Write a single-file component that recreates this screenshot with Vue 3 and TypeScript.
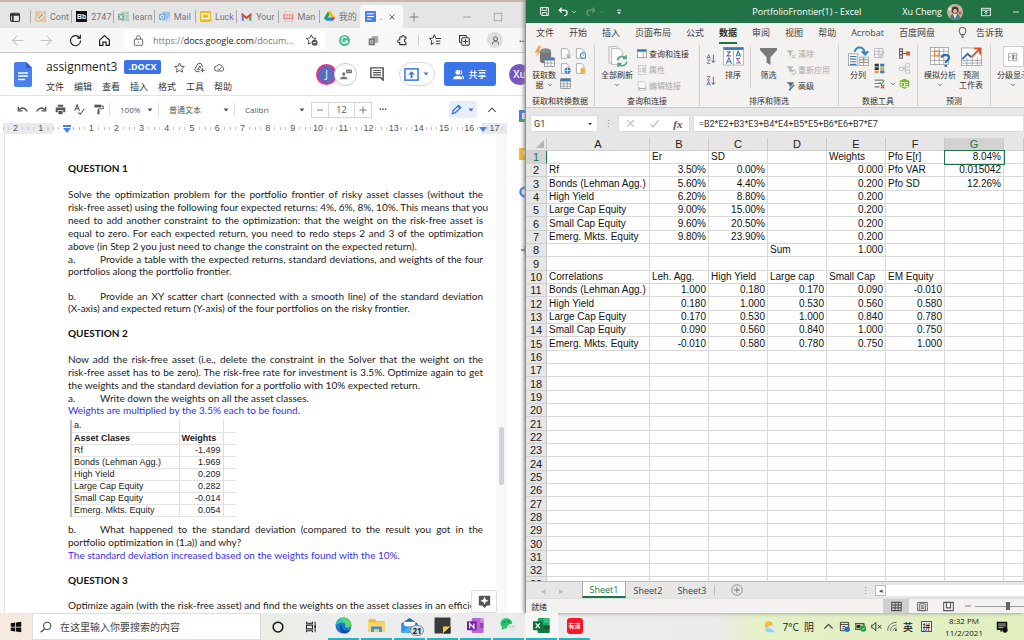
<script setup lang="ts">
import { ref } from 'vue'

interface Tab { icon: string; title: string }
type Row = Record<string, string>

const icons: Record<string, string> = {
  pane: '<rect x="2" y="3" width="12" height="11" rx="2" fill="none" stroke="#333" stroke-width="1.4"/><path d="M2 5h12M5 5v9" stroke="#333" stroke-width="2.4"/>',
  pencil: '<rect width="16" height="16" fill="#eac69c"/><path d="M3 13l1-4 7-7 3 3-7 7z" fill="#fff"/><path d="M5 11l7-7" stroke="#6aa7a5" stroke-width="2"/>',
  bb: '<rect width="16" height="16" fill="#111"/><text x="8" y="12" font-size="10" font-weight="700" fill="#fff" text-anchor="middle" font-family="Liberation Sans">Bb</text>',
  xl: '<rect x="5" y="1" width="11" height="14" fill="#a9cdb8"/><path d="M5 5h11M5 10h11M10 1v14" stroke="#d5e8dc"/><rect y="4" width="9" height="9" fill="#7db296"/><path d="M2.500 6l4 5M6.500 6l-4 5" stroke="#fff" stroke-width="1.300"/>',
  outlook: '<rect x="5" y="1" width="11" height="12" fill="#9cc4ea"/><path d="M5 8l6 4 5-4v7H5z" fill="#bfdaf2"/><rect y="4" width="9" height="9" fill="#77a9da"/><circle cx="4.500" cy="8.500" r="2.300" fill="none" stroke="#fff" stroke-width="1.400"/>',
  slides: '<rect x="0" y="0" width="16" height="16" rx="2" fill="#f5b912"/><rect x="3" y="4" width="10" height="7" fill="none" stroke="#fff" stroke-width="2"/>',
  gmail: '<path d="M1 14V3l3 2v9z" fill="#4285f4"/><path d="M12 14V5l3-2v11z" fill="#34a853"/><path d="M1 3l7 5 7-5v4l-7 5-7-5z" fill="#ea4335"/>',
  pdf: '<path d="M3 0h8l3 3v13H3z" fill="#f5dcd9" stroke="#e7aaa5"/><rect x="0" y="5" width="15" height="7" fill="#e48f88"/><path d="M3 10V7h2v1.500H3M7 7v3h1.500V7zM11 10V7h2M11 8.500h2" stroke="#fff" fill="none"/>',
  drive: '<path d="M5.500 1h5L8 5.500 3 14 0 10z" fill="#0da960"/><path d="M5.500 1h5L16 10h-5z" fill="#fcbc05"/><path d="M3 14l2.500-4.500H16L13 14z" fill="#2b7df5"/><path d="M11 9.500h5L13 14z" fill="#e44336"/>',
  docs: '<rect width="16" height="16" rx="1" fill="#4a80ee"/><path d="M3 4h10M3 8h10M3 12h6" stroke="#fff" stroke-width="1.800"/>',
  back: '<path d="M15 8H2M8 2L2 8l6 6" fill="none" stroke="#c4c4c4" stroke-width="1.300"/>',
  fwd: '<path d="M1 8h13M8 2l6 6-6 6" fill="none" stroke="#c4c4c4" stroke-width="1.300"/>',
  reload: '<path d="M13 4.500A6.200 6.200 0 1 0 14.200 8M14 1v4h-4" fill="none" stroke="#222" stroke-width="1.400"/>',
  home: '<path d="M2 7.500L8 2l6 5.500V14h-4v-4H6v4H2z" fill="none" stroke="#222" stroke-width="1.500"/>',
  lock: '<rect x="2" y="6" width="12" height="9" rx="1" fill="none" stroke="#666" stroke-width="1.400"/><path d="M5 6V4a3 3 0 0 1 6 0v2" fill="none" stroke="#666" stroke-width="1.400"/><circle cx="8" cy="10.500" r="1.100" fill="#666"/>',
  starplus: '<path d="M7 1l2 4.300 4.500.5-3.300 3M7 1L5 5.300.500 6l3.400 3-1 4.500L7 11.500" fill="none" stroke="#555" stroke-width="1.300"/><circle cx="11.500" cy="11.500" r="4" fill="#555"/><path d="M9.500 11.500h4" stroke="#fff" stroke-width="1.300"/>',
  grammarly: '<circle cx="8" cy="8" r="8" fill="#3fbf92"/><path d="M11.500 5A4.300 4.300 0 1 0 12 9H8.500M12 9v3" fill="none" stroke="#fff" stroke-width="1.700"/>',
  office: '<path d="M5 2l6-1 4 1v9l-4 1-6-1z" fill="#aaa"/><rect x="1" y="5" width="9" height="10" fill="#777"/><path d="M4 8h3v4H4z" fill="none" stroke="#ddd"/>',
  puzzle: '<path d="M4 3h3c-.500-3 4-3 3.500 0H13v3M13 10v4H4v-3C0 12 0 6 4 7V3M13 6c-3-.500-3 4.500 0 4" fill="none" stroke="#333" stroke-width="1.500"/>',
  favs: '<path d="M9 5.500L7 1 5 5.500.500 6l3.300 3-1 5L7 11.500M9 6h7M9 9.500h6M9 13h6" fill="none" stroke="#333" stroke-width="1.300"/>',
  collections: '<path d="M4 11H2V2h9v2" fill="none" stroke="#333" stroke-width="1.400"/><rect x="5" y="5" width="10" height="10" rx="1.500" fill="none" stroke="#333" stroke-width="1.400"/><path d="M10 7v6M7 10h6" stroke="#333" stroke-width="1.400"/>',
  person: '<circle cx="8" cy="5" r="3.500" fill="none" stroke="#444" stroke-width="1.400"/><path d="M2.500 15c0-8 11-8 11 0" fill="none" stroke="#444" stroke-width="1.400"/>',
  star: '<path d="M8 1.500l2 4.500 5 .500-3.700 3.300 1 5L8 12.200l-4.300 2.600 1-5L1 6.500 6 6z" fill="none" stroke="#555" stroke-width="1.400"/>',
  driveplus: '<path d="M8 14H3L1 11 6 2h4l3 5.500M4.500 11h4M6 11l2.500-5 2 3.500" fill="none" stroke="#555" stroke-width="1.400"/><path d="M12.500 9v6M9.500 12h6" stroke="#555" stroke-width="1.500"/>',
  cloud: '<path d="M4 13a3.500 3.500 0 0 1 0-7 4.300 4.300 0 0 1 8 1.200A3 3 0 0 1 12 13z" fill="none" stroke="#555" stroke-width="1.400"/><path d="M5.500 9.300l2 2L11 8" fill="none" stroke="#555" stroke-width="1.300"/>',
  anon: '<circle cx="5" cy="8" r="2.200" fill="#777"/><path d="M0 15c0-5 10-5 10 0z" fill="#777"/><rect x="8" y="2" width="8" height="5" rx="1.500" fill="#777"/><path d="M9.500 4.500h1M11.500 4.500h1M13.500 4.500h1" stroke="#fff"/>',
  comment: '<path d="M1 1h14v14l-3-3H1z" fill="none" stroke="#555" stroke-width="1.700"/><path d="M3.500 4h9M3.500 6.500h9M3.500 9h9" stroke="#555" stroke-width="1.400"/>',
  present: '<rect x="1" y="2" width="14" height="12" fill="none" stroke="#3b73e3" stroke-width="1.600"/><path d="M8 12V7" stroke="#3b73e3" stroke-width="2"/><path d="M4.500 8L8 4.500 11.500 8z" fill="#3b73e3"/>',
  share: '<circle cx="7" cy="5" r="3.500" fill="#fff"/><path d="M0 15c0-7 14-7 14 0z" fill="#fff"/><path d="M11 2a3.500 3.500 0 0 1 0 6M13 10c2 1 3 2.500 3 5" stroke="#fff" fill="none" stroke-width="1.500"/>',
  undo: '<path d="M2 4v6h6" fill="none" stroke="#555" stroke-width="2"/><path d="M2.500 9C6 4 12 5 15 11" fill="none" stroke="#555" stroke-width="2"/>',
  redo: '<path d="M14 4v6H8" fill="none" stroke="#555" stroke-width="2"/><path d="M13.500 9C10 4 4 5 1 11" fill="none" stroke="#555" stroke-width="2"/>',
  print: '<path d="M4 1h8v3H4zM1 5h14v7h-3V9H4v3H1zM5 10h6v5H5z" fill="#555"/>',
  spell: '<path d="M1 10L4.500 1 8 10M2.300 7h4.500M6 12l3 3 6-8" fill="none" stroke="#555" stroke-width="1.500"/>',
  paint: '<path d="M2 1h10v4H2z" fill="#555"/><path d="M12 3h3v4H8v3" fill="none" stroke="#555" stroke-width="1.400"/><rect x="6.500" y="9" width="3" height="6" fill="#555"/>',
  edit: '<path d="M2 14l1-4 8-8 3 3-8 8z" fill="none" stroke="#3b6fd8" stroke-width="2"/><path d="M10 3l3 3" stroke="#3b6fd8" stroke-width="2"/>',
  caret: '<path d="M3 5h10l-5 6z" fill="currentColor"/>',
  up: '<path d="M2 11l6-6 6 6" fill="none" stroke="#555" stroke-width="1.800"/>',
  down: '<path d="M3 5l5 5 5-5" fill="none" stroke="currentColor" stroke-width="1.800"/>',
  close: '<path d="M3 3l10 10M13 3L3 13" stroke="currentColor" stroke-width="1.500"/>',
  plus: '<path d="M8 1v14M1 8h14" stroke="currentColor" stroke-width="1.500"/>',
  minus: '<path d="M2 8h12" stroke="currentColor" stroke-width="1.500"/>',
  max: '<rect x="2" y="2" width="12" height="12" fill="none" stroke="#999" stroke-width="1.300"/>',
  explore: '<path d="M1 1h14v12h-4l-3 3-3-3H1z" fill="#555"/><path d="M8 2l1.500 3.500L13 7 9.500 8.500 8 12 6.500 8.500 3 7l3.500-1.500z" fill="#fff"/>',
  save: '<path d="M1 1h14v14H3l-2-2z" fill="none" stroke="#fff" stroke-width="1.600"/><path d="M4 1v5h8V1M4 15v-5h8v5" fill="none" stroke="#fff" stroke-width="1.500"/>',
  xundo: '<path d="M6 1L2 5l4 4M2 5h8c6 0 6 8 0 9" fill="none" stroke="currentColor" stroke-width="2"/>',
  xredo: '<path d="M10 1l4 4-4 4M14 5H6c-6 0-6 8 0 9" fill="none" stroke="currentColor" stroke-width="2"/>',
  custom: '<path d="M5 5h6" stroke="#fff" stroke-width="1.500"/><path d="M5 8h6l-3 3.500z" fill="#fff"/>',
  ribbon: '<rect x="1" y="2" width="14" height="12" fill="none" stroke="#fff" stroke-width="1.300"/><path d="M1 5h14M8 12V7M5.500 9L8 6.500 10.500 9" fill="none" stroke="#fff" stroke-width="1.400"/>',
  bulb: '<path d="M5 11c0-2-2-3-2-5.500a5 5 0 0 1 10 0C13 8 11 9 11 11zM6 13h4M6.500 15h3" fill="none" stroke="#444" stroke-width="1.300"/>',
  getdata: '<path d="M9 8v15c0 5 17 5 17 0V8z" fill="#787878"/><ellipse cx="17.500" cy="7" rx="8.500" ry="3.500" fill="#8b8b8b"/><path d="M7 0L1 10h5L2 18 11 7H7l4-7z" fill="#eaa24a"/><rect x="16" y="18" width="15" height="13" fill="#fff" stroke="#777"/><rect x="16" y="18" width="15" height="4" fill="#3d78b8"/><path d="M16 26h15M21 18v13M26 18v13" stroke="#888"/>',
  pagetxt: '<path d="M2 1h8l3 3v11H2z" fill="#fff" stroke="#8a8a8a"/><rect x="9" y="8" width="7" height="8" fill="#eee"/><path d="M10 10h5M10 12h5M10 14h5" stroke="#777"/>',
  pageclock: '<path d="M2 1h8l3 3v11H2z" fill="#fff" stroke="#8a8a8a"/><circle cx="12" cy="11" r="4" fill="#fff" stroke="#3d86c6" stroke-width="1.500"/><path d="M12 9v2h2" fill="none" stroke="#3d86c6"/>',
  pageweb: '<path d="M2 1h8l3 3v11H2z" fill="#fff" stroke="#8a8a8a"/><circle cx="11" cy="11" r="4.500" fill="#3d78c6"/><path d="M7 11h8M11 7v8" stroke="#fff"/>',
  pageconn: '<path d="M2 1h8l3 3v11H2z" fill="#fff" stroke="#8a8a8a"/><rect x="8" y="7" width="7" height="9" rx="2" fill="#e9b45c"/>',
  table: '<rect x="1" y="1" width="14" height="14" fill="#fff" stroke="#777"/><rect x="1" y="1" width="14" height="4" fill="#3d78b8"/><path d="M1 8.500h14M1 12h14M5.500 5v10M10.500 5v10" stroke="#888"/>',
  refresh: '<path d="M3 1h12l5 5v20H3z" fill="#f6f6f6" stroke="#999"/><path d="M7 4h12l5 5v19H7z" fill="#fff" stroke="#999"/><circle cx="23" cy="23" r="9" fill="#f3f2f1"/><path d="M16 22a7 7 0 0 1 12-4M30 24a7 7 0 0 1-12 4M29 14v5h-5M17 32v-5h5" fill="none" stroke="#5aa584" stroke-width="2.600"/>',
  qwin: '<rect x="1" y="1" width="14" height="13" fill="#fff" stroke="#777"/><rect x="1" y="1" width="14" height="3.500" fill="#3d78b8"/><path d="M10 5v9" stroke="#777"/>',
  prop: '<rect x="2" y="1" width="12" height="14" fill="#f6f6f6" stroke="#b5b0bb"/><path d="M4 5h2M8 5h5M4 8h2M8 8h5M4 11h2M8 11h5" stroke="#a9a0b3" stroke-width="1.500"/>',
  link: '<path d="M2 1h8l3 3v11H2z" fill="#fafafa" stroke="#b5b5b5"/><path d="M5 12h8M4 10v4M14 10v4" stroke="#aaa" stroke-width="1.500"/>',
  az: '<path d="M1 8L4 1l3 7M2 6h4" fill="none" stroke="#3b78c0" stroke-width="1.500"/><path d="M1.500 10h5l-5 6h5.500" fill="none" stroke="#8d63a8" stroke-width="1.500"/><path d="M12 1v13M9 11l3 3.500L15 11" fill="none" stroke="#555" stroke-width="1.400"/>',
  za: '<path d="M1 16l3-7 3 7M2 14h4" fill="none" stroke="#3b78c0" stroke-width="1.500"/><path d="M1.500 1h5l-5 6h5.500" fill="none" stroke="#8d63a8" stroke-width="1.500"/><path d="M12 1v13M9 11l3 3.500L15 11" fill="none" stroke="#555" stroke-width="1.400"/>',
  sort: '<rect x="1" y="2" width="30" height="27" fill="#fff" stroke="#999"/><rect x="1" y="2" width="30" height="4" fill="#3d78b8"/><path d="M16 6v23" stroke="#888"/><path d="M6 9h5l-5 6h6M20 26h6l-5-7h5" fill="none" stroke="#8d63a8" stroke-width="1.700"/><path d="M5 27l4-9 4 9M6 24h6M20 16l3-8 4 8M21 14h5" fill="none" stroke="#3b78c0" stroke-width="1.700"/>',
  funnel: '<path d="M3 3h26v3L19 17v12l-6-4v-8L3 6z" fill="#7a7a7a"/>',
  clear: '<path d="M1 2h11L8 7v5L5 10V7z" fill="#bbb"/><path d="M9 9l6 6M15 9l-6 6" stroke="#aaa" stroke-width="1.500"/>',
  reapply: '<path d="M1 2h11L8 7v5L5 10V7z" fill="#bbb"/><path d="M9 13a3.500 3.500 0 1 0 1-4M9 7v3h3" fill="none" stroke="#aaa" stroke-width="1.500"/>',
  adv: '<path d="M1 2h12L9 7 6 11V7z" fill="#666"/><path d="M5 15l8-9" stroke="#3b78c0" stroke-width="2.500"/>',
  cols: '<rect x="1" y="12" width="14" height="18" fill="#fff" stroke="#888"/><path d="M3 16h10M3 20h10M3 24h10M3 28h10" stroke="#3d78b8" stroke-width="1.600"/><rect x="18" y="17" width="13" height="13" fill="#fff" stroke="#888"/><path d="M18 21h13M18 25h13M24 17v13" stroke="#888" stroke-width="1.500"/><path d="M10 9c3-10 15-9 16 3M21 8l5 5 5-5" fill="none" stroke="#3d86c6" stroke-width="3"/>',
  flash: '<rect x="1" y="1" width="12" height="13" fill="#faf8fb" stroke="#aaa0b0"/><path d="M1 5h12M1 9h12M7 1v13" stroke="#aaa0b0"/><path d="M15 5l-7 9" stroke="#bbb" stroke-width="2"/>',
  dup: '<path d="M1 1h6v4H1zM1 6h6v4H1z" fill="#333"/><path d="M1 11h6v4H1zM9 6h6v4H9z" fill="#d8a83c"/><path d="M9 1h6v4H9zM9 11h6v4H9z" fill="#3d78b8"/>',
  valid: '<path d="M1 3h12M1 8h9M1 13h7" stroke="#777" stroke-width="1.800"/><path d="M8 6l3 3 4-6" fill="none" stroke="#54a05a" stroke-width="1.600"/><path d="M10 10l5 5M15 10l-5 5" stroke="#d0453b" stroke-width="1.600"/>',
  consol: '<path d="M1 1h4v14H1z" fill="none" stroke="#555" stroke-width="1.500"/><path d="M1 5h4M1 10h4M6 8h5" stroke="#555" stroke-width="1.500"/><rect x="10" y="5" width="6" height="6" fill="#d95f3a"/>',
  rel: '<rect x="1" y="6" width="5" height="5" fill="none" stroke="#b5a9b8"/><rect x="10" y="1" width="5" height="5" fill="none" stroke="#b5a9b8"/><rect x="10" y="10" width="5" height="5" fill="none" stroke="#b5a9b8"/><path d="M6 8h3V4M9 8v5" fill="none" stroke="#aaa"/>',
  model: '<path d="M1 4l7-3 7 3v8l-7 4-7-4z" fill="#76b82a"/><path d="M3 6l5 1v6l-5-2zM9 7l4-1M9 10l4-1M9 13l4-1" fill="none" stroke="#fff" stroke-width="1.300"/>',
  whatif: '<rect x="1" y="2" width="27" height="26" fill="#fff" stroke="#888"/><path d="M1 8h27M1 15h27M1 22h27M7 2v26M14 2v26M21 2v26" stroke="#888"/><rect x="7" y="8" width="7" height="7" fill="none" stroke="#e8883c" stroke-width="2"/><path d="M18 18c0-6 11-6 11 0 0 4-5 4-5 8M24 29v3" fill="none" stroke="#2f72b8" stroke-width="3.500"/>',
  forecast: '<rect x="1" y="3" width="30" height="27" fill="#fff" stroke="#888"/><path d="M1 22h30M1 26h30M9 18v12M17 18v12M25 18v12" stroke="#888"/><path d="M2 20l8-8 6 5" fill="none" stroke="#2f72b8" stroke-width="3"/><path d="M16 17L28 5M20 4h9v9" fill="none" stroke="#d8542f" stroke-width="3"/>',
  outline: '<path d="M5 2H1v12h4M1 8h4" fill="none" stroke="#777"/><path d="M7 2h7v12H7zM7 6h7M7 10h7" fill="none" stroke="#777"/><path d="M9 4v8" stroke="#3d78b8" stroke-width="1.500"/>',
  check: '<path d="M2 9l4 4 8-10" fill="none" stroke="#bbb" stroke-width="1.700"/>',
  circleplus: '<circle cx="8" cy="8" r="7" fill="none" stroke="#777"/><path d="M8 4v8M4 8h8" stroke="#777" stroke-width="1.300"/>',
  grid: '<path d="M1 2h14v12H1zM1 6h14M1 10h14M6 2v12M10.500 2v12" fill="none" stroke="#555" stroke-width="1.500"/>',
  layout: '<path d="M1 2h14v12H1zM4 4h8v10H4zM6 7h4M6 9h4M6 11h4" fill="none" stroke="#555" stroke-width="1.300"/>',
  breaks: '<path d="M1 2h14v12H1zM5 2v8h6V2" fill="none" stroke="#555" stroke-width="1.500"/>',
  win: '<path d="M1 3l6-1v5.500H1zM8 2l7-1v6.500H8zM1 8.500h6V14l-6-1zM8 8.500h7V15l-7-1z" fill="#111"/>',
  search: '<circle cx="9.500" cy="6.500" r="5" fill="none" stroke="#333" stroke-width="1.300"/><path d="M6 10.500L1 15" stroke="#333" stroke-width="1.500"/>',
  cortana: '<circle cx="8" cy="8" r="6.500" fill="none" stroke="#111" stroke-width="2"/>',
  taskview: '<path d="M2 1v2h8V1M2 15v-2h8v2M2 5.500h8v5H2z" fill="none" stroke="#222" stroke-width="1.400"/><path d="M13.500 1v14" stroke="#222" stroke-width="1.300"/><path d="M12.500 6h2v3h-2z" fill="#222"/>',
  edge: '<circle cx="16" cy="16" r="15" fill="#1b78d0"/><path d="M1 17C0 5 12-2 23 3c8 4 10 13 5 16-4 2-9 1-9-1 2-3 0-7-5-7C7 11 2 14 1 17z" fill="#35c1b1"/><path d="M14 2c12-2 20 10 15 16-3 3-9 1-10 0 3-6-1-9-5-9z" fill="#62d56a"/><path d="M12 14c-6 5-3 15 6 17 5 0 9-3 11-7-7 4-15 1-17-10z" fill="#0c4fa4"/>',
  folder: '<path d="M1 4h12l3 4h15v20H1z" fill="#f2b632"/><path d="M1 10h30v18H1z" fill="#fbd667"/><path d="M6 28V18h20v10h-5v-5H11v5z" fill="#3e8edb"/>',
  mail: '<path d="M1 12L16 2l15 10v17H1z" fill="#1564b0"/><path d="M5 9h22v9H5z" fill="#fff"/><path d="M1 12l15 10 15-10v17H1z" fill="#2b93e0"/><path d="M1 29l15-12 15 12z" fill="#3fb2f2"/>',
  sticky: '<rect x="1" y="1" width="30" height="30" fill="#3b3b3b"/><path d="M17 31V18h14z" fill="#f8cf2b"/><path d="M17 31l14-13v13z" fill="#2c2c2c"/>',
  onenote: '<rect x="9" y="2" width="22" height="28" rx="2" fill="#b866d6"/><path d="M25 2h6v9h-6z" fill="#d08ae8"/><path d="M25 11h6v10h-6z" fill="#9a3fbb"/><rect x="0" y="8" width="18" height="17" rx="1" fill="#7b1fa2"/><path d="M5 21v-9l8 9v-9" fill="none" stroke="#fff" stroke-width="2.300"/>',
  wechat: '<ellipse cx="12" cy="12" rx="11" ry="9.500" fill="#23c268"/><path d="M4 18l-1 6 7-3z" fill="#23c268"/><ellipse cx="22" cy="20" rx="9" ry="7.500" fill="#e2e8e4"/><path d="M25 26l5 3-1-5z" fill="#e2e8e4"/><circle cx="8" cy="9" r="1.500" fill="#175f36"/><circle cx="16" cy="9" r="1.500" fill="#175f36"/><circle cx="19" cy="18" r="1.200" fill="#888"/><circle cx="25" cy="18" r="1.200" fill="#888"/>',
  excel: '<rect x="9" y="2" width="22" height="28" rx="2" fill="#21a366"/><path d="M20 2h11v9H20z" fill="#33c481"/><path d="M9 16h22v14H9z" fill="#107c41"/><path d="M20 16h11v7H20z" fill="#185c37"/><rect x="0" y="8" width="18" height="17" rx="1" fill="#0f703b"/><path d="M5 12l8 9M13 12l-8 9" stroke="#fff" stroke-width="2.300"/>',
  weather: '<circle cx="11" cy="12" r="9" fill="#f8b83c"/><path d="M9 28a6 6 0 0 1 0-12 8 8 0 0 1 14 0 6 6 0 0 1 1 12z" fill="#d9ebfb"/><path d="M9 28a6 6 0 0 1-3-11c8 0 14 5 20 11z" fill="#9fcdf3"/>',
  sync: '<path d="M2 2h12v12H2zM2 5h12M5 8h4M5 11h3" fill="none" stroke="#333" stroke-width="1.300"/><circle cx="12" cy="12" r="4" fill="#2a74c9"/>',
  battery: '<rect x="0" y="4" width="13" height="8" fill="none" stroke="#222" stroke-width="1.500"/><path d="M2 6h6v4H2z" fill="#222"/><circle cx="12" cy="11" r="4.500" fill="#1d9b3e"/><path d="M10 11l1.500 1.500L14 9.500" fill="none" stroke="#fff"/>',
  mute: '<path d="M1 6h2l4-4v12l-4-4H1z" fill="none" stroke="#222" stroke-width="1.300"/><path d="M10 6l5 5M15 6l-5 5" stroke="#222" stroke-width="1.300"/>',
  wifi: '<path d="M1 14C1 6 7 2 14 2M5 14c0-5 4-8 9-8M9 14c0-3 2-4 5-4" fill="none" stroke="#666" stroke-width="1.400"/><circle cx="13" cy="13" r="1.500" fill="#333"/>',
  notif: '<path d="M1 1h14v11H9l-3 3v-3H1z" fill="#111"/><path d="M3 4h10M3 6.500h10M3 9h7" stroke="#dce9be"/><circle cx="12" cy="12" r="3.500" fill="#111"/>'
}

const tabs: Tab[] = [
  { icon: 'pencil', title: 'Cont' },
  { icon: 'bb', title: '2747' },
  { icon: 'xl', title: 'learn' },
  { icon: 'outlook', title: 'Mail' },
  { icon: 'slides', title: 'Luck' },
  { icon: 'gmail', title: 'Your' },
  { icon: 'pdf', title: 'Man' },
  { icon: 'drive', title: '我的' }
]
const docMenus = ['文件', '编辑', '查看', '插入', '格式', '工具', '帮助']
const ruler = ['2', '1', '', ...Array.from({ length: 17 }, (_, i) => String(i + 1))]
const weights: [string, string][] = [
  ['Rf', '-1.499'], ['Bonds (Lehman Agg.)', '1.969'], ['High Yield', '0.209'],
  ['Large Cap Equity', '0.282'], ['Small Cap Equity', '-0.014'], ['Emerg. Mkts. Equity', '0.054']
]

const xlMenus = ['文件', '开始', '插入', '页面布局', '公式', '数据', '审阅', '视图', '帮助', 'Acrobat', '百度网盘']
const columns = ['A', 'B', 'C', 'D', 'E', 'F', 'G', 'H']
const cells: Record<number, Row> = {
  1: { B: 'Er', C: 'SD', E: 'Weights', F: 'Pfo E[r]', G: '8.04%' },
  2: { A: 'Rf', B: '3.50%', C: '0.00%', E: '0.000', F: 'Pfo VAR', G: '0.015042' },
  3: { A: 'Bonds (Lehman Agg.)', B: '5.60%', C: '4.40%', E: '0.200', F: 'Pfo SD', G: '12.26%' },
  4: { A: 'High Yield', B: '6.20%', C: '8.80%', E: '0.200' },
  5: { A: 'Large Cap Equity', B: '9.00%', C: '15.00%', E: '0.200' },
  6: { A: 'Small Cap Equity', B: '9.60%', C: '20.50%', E: '0.200' },
  7: { A: 'Emerg. Mkts. Equity', B: '9.80%', C: '23.90%', E: '0.200' },
  8: { D: 'Sum', E: '1.000' },
  10: { A: 'Correlations', B: 'Leh. Agg.', C: 'High Yield', D: 'Large cap', E: 'Small Cap', F: 'EM Equity' },
  11: { A: 'Bonds (Lehman Agg.)', B: '1.000', C: '0.180', D: '0.170', E: '0.090', F: '-0.010' },
  12: { A: 'High Yield', B: '0.180', C: '1.000', D: '0.530', E: '0.560', F: '0.580' },
  13: { A: 'Large Cap Equity', B: '0.170', C: '0.530', D: '1.000', E: '0.840', F: '0.780' },
  14: { A: 'Small Cap Equity', B: '0.090', C: '0.560', D: '0.840', E: '1.000', F: '0.750' },
  15: { A: 'Emerg. Mkts. Equity', B: '-0.010', C: '0.580', D: '0.780', E: '0.750', F: '1.000' }
}
const isNumber = (v?: string) => !!v && /^-?[\d.]+%?$/.test(v)

const apps = ['edge', 'folder', 'mail', 'sticky', 'onenote', 'wechat', 'excel', 'youdao']
const zoomLevel = ref('100%')
const paraStyle = ref('普通文本')
const fontName = ref('Calibri')
const fontSize = ref('12')
const nameBox = ref('G1')
const formula = ref('=B2*E2+B3*E3+B4*E4+B5*E5+B6*E6+B7*E7')
const query = ref('')
const sheetZoom = ref(70)
</script>

<template>
  <div class="desktop">
    <div class="windows">
      <section class="browser" aria-label="assignment3">
        <div class="strip">
          <button class="pane" aria-label="Tabs"><svg viewBox="0 0 16 16" class="i12" v-html="icons.pane" /></button>
          <div class="tabs">
            <button v-for="t in tabs" :key="t.title" class="tab">
              <svg viewBox="0 0 16 16" class="i11" v-html="icons[t.icon]" /><span>{{ t.title }}</span>
            </button>
          </div>
          <div class="tab-active">
            <svg viewBox="0 0 16 16" class="i11" v-html="icons.docs" /><b>.</b>
            <button aria-label="Close tab"><svg viewBox="0 0 16 16" class="i8" v-html="icons.close" /></button>
          </div>
          <button class="newtab" aria-label="New tab"><svg viewBox="0 0 16 16" class="i10" v-html="icons.plus" /></button>
          <div class="winctl">
            <button aria-label="Minimize"><svg viewBox="0 0 16 16" class="i10" v-html="icons.minus" /></button>
            <button aria-label="Maximize"><svg viewBox="0 0 16 16" class="i10" v-html="icons.max" /></button>
          </div>
        </div>

        <div class="address">
          <div class="nav">
            <button v-for="n in ['back', 'fwd', 'reload', 'home']" :key="n" :aria-label="n"><svg viewBox="0 0 16 16" class="i13" v-html="icons[n]" /></button>
          </div>
          <div class="urlbox">
            <svg viewBox="0 0 16 16" class="i11" v-html="icons.lock" />
            <a class="url" href="#">https://<em>docs.google.com</em>/docum...</a>
            <button aria-label="Favorite"><svg viewBox="0 0 16 16" class="i12" v-html="icons.starplus" /></button>
          </div>
          <div class="exts">
            <button v-for="n in ['grammarly', 'office', 'puzzle']" :key="n" :aria-label="n"><svg viewBox="0 0 16 16" class="i11" v-html="icons[n]" /></button>
          </div>
          <div class="exts right">
            <button v-for="n in ['favs', 'collections']" :key="n" :aria-label="n"><svg viewBox="0 0 16 16" class="i12" v-html="icons[n]" /></button>
            <button class="profile" aria-label="Profile"><svg viewBox="0 0 16 16" class="i9" v-html="icons.person" /></button>
          </div>
          <button class="more" aria-label="More">···</button>
        </div>

        <header class="dochead">
          <svg class="doclogo" viewBox="0 0 18 25"><path d="M2 0h10l6 6v17a2 2 0 0 1-2 2H2a2 2 0 0 1-2-2V2a2 2 0 0 1 2-2z" fill="#4a7fec" /><path d="M12 0l6 6h-6z" fill="#2b5fc6" /><path d="M4 11h10M4 14h10M4 17.500h7" stroke="#fff" stroke-width="1.500" /></svg>
          <div class="docname">
            <div class="titleline">
              <h1>assignment3</h1><span class="badge">.DOCX</span>
              <button v-for="n in ['star', 'driveplus', 'cloud']" :key="n" :aria-label="n"><svg viewBox="0 0 16 16" class="i11" v-html="icons[n]" /></button>
            </div>
            <nav class="docmenu"><button v-for="m in docMenus" :key="m">{{ m }}</button></nav>
          </div>
          <div class="docacts">
            <div class="people"><span class="ava j">J</span><span class="ava anon"><svg viewBox="0 0 16 16" class="i12" v-html="icons.anon" /></span></div>
            <button class="cmt" aria-label="Comments"><svg viewBox="0 0 16 16" class="i14" v-html="icons.comment" /></button>
            <button class="present" aria-label="Present"><svg viewBox="0 0 16 16" class="i15" v-html="icons.present" /><svg viewBox="0 0 16 16" class="i8" v-html="icons.caret" /></button>
            <button class="share"><svg viewBox="0 0 16 16" class="i11" v-html="icons.share" />共享</button>
            <span class="ava xu">Xu</span>
          </div>
        </header>

        <div class="docbody">
          <div class="docmain">
            <div class="toolbar">
              <div class="tools">
                <button v-for="n in ['undo', 'redo', 'print', 'spell', 'paint']" :key="n" :aria-label="n"><svg viewBox="0 0 16 16" class="i11" v-html="icons[n]" /></button>
              </div>
              <label class="pick zoomsel"><select v-model="zoomLevel" aria-label="Zoom"><option>100%</option></select><svg viewBox="0 0 16 16" class="i8" v-html="icons.caret" /></label>
              <label class="pick stylesel"><select v-model="paraStyle" aria-label="Style"><option>普通文本</option></select><svg viewBox="0 0 16 16" class="i8" v-html="icons.caret" /></label>
              <label class="pick fontsel"><select v-model="fontName" aria-label="Font"><option>Calibri</option></select><svg viewBox="0 0 16 16" class="i8" v-html="icons.caret" /></label>
              <div class="size">
                <button aria-label="Smaller"><svg viewBox="0 0 16 16" class="i8" v-html="icons.minus" /></button>
                <input v-model="fontSize" aria-label="Font size">
                <button aria-label="Larger"><svg viewBox="0 0 16 16" class="i8" v-html="icons.plus" /></button>
              </div>
              <button class="dots" aria-label="More tools">•••</button>
              <button class="editmode" aria-label="Editing mode"><svg viewBox="0 0 16 16" class="i11" v-html="icons.edit" /><svg viewBox="0 0 16 16" class="i8" v-html="icons.caret" /></button>
              <button class="collapse" aria-label="Collapse"><svg viewBox="0 0 16 16" class="i10" v-html="icons.up" /></button>
            </div>
            <div class="ruler">
              <span v-for="(r, i) in ruler" :key="i" :class="{ off: i < 2 }">{{ r }}</span>
              <svg class="mark start" viewBox="0 0 8 8"><path d="M0 0h8v2H0zM0 3h8L4 8z" fill="#4a7fec" /></svg>
              <svg class="mark end" viewBox="0 0 8 8"><path d="M0 2h8L4 7z" fill="#4a7fec" /></svg>
            </div>
            <div class="scroll">
              <article class="paper">
                <h2>QUESTION 1</h2>
                <div class="para">
                  <p class="j">Solve the optimization problem for the portfolio frontier of risky asset classes (without the</p>
                  <p class="j">risk-free asset) using the following four expected returns: 4%, 6%, 8%, 10%. This means that you</p>
                  <p class="j">need to add another constraint to the optimization: that the weight on the risk-free asset is</p>
                  <p class="j">equal to zero. For each expected return, you need to redo steps 2 and 3 of the optimization</p>
                  <p>above (in Step 2 you just need to change the constraint on the expected return).</p>
                </div>
                <div class="para item">
                  <div class="first"><span>a.</span><p class="j">Provide a table with the expected returns, standard deviations, and weights of the four</p></div>
                  <p>portfolios along the portfolio frontier.</p>
                </div>
                <div class="para item gap">
                  <div class="first"><span>b.</span><p class="j">Provide an XY scatter chart (connected with a smooth line) of the standard deviation</p></div>
                  <p>(X-axis) and expected return (Y-axis) of the four portfolios on the risky frontier.</p>
                </div>
                <h2 class="gap">QUESTION 2</h2>
                <div class="para">
                  <p class="j">Now add the risk-free asset (i.e., delete the constraint in the Solver that the weight on the</p>
                  <p class="j">risk-free asset has to be zero). The risk-free rate for investment is 3.5%. Optimize again to get</p>
                  <p>the weights and the standard deviation for a portfolio with 10% expected return.</p>
                </div>
                <div class="para item">
                  <div class="first"><span>a.</span><p>Write down the weights on all the asset classes.</p></div>
                  <p class="answer">Weights are multiplied by the 3.5% each to be found.</p>
                </div>
                <table class="weights">
                  <tbody>
                    <tr><td>a.</td><td></td><td></td></tr>
                    <tr><th>Asset Clases</th><th>Weights</th><td></td></tr>
                    <tr v-for="w in weights" :key="w[0]"><td>{{ w[0] }}</td><td class="num">{{ w[1] }}</td><td></td></tr>
                  </tbody>
                </table>
                <div class="para">
                  <div class="first"><span>b.</span><p class="j">What happened to the standard deviation (compared to the result you got in the</p></div>
                  <p>portfolio optimization in (1.a)) and why?</p>
                  <p class="answer">The standard deviation increased based on the weights found with the 10%.</p>
                </div>
                <h2 class="gap last">QUESTION 3</h2>
                <div class="para"><p>Optimize again (with the risk-free asset) and find the weights on the asset classes in an efficient</p></div>
              </article>
              <i class="thumb" />
              <button class="explore" aria-label="Explore"><svg viewBox="0 0 16 16" class="i13" v-html="icons.explore" /></button>
            </div>
          </div>
          <aside class="side">
            <svg viewBox="0 0 12 12"><path d="M0 0h12v12H0z" fill="#3f7df0" /><path d="M3 3h9v6H3z" fill="#fff" /><path d="M0 10h9v2H0z" fill="#35a853" /></svg>
            <svg viewBox="0 0 12 12"><path d="M0 0h12v12H0z" fill="#f5bb1d" /><circle cx="7" cy="5" r="3" fill="#fff" /></svg>
            <svg viewBox="0 0 12 12"><circle cx="6" cy="6" r="4.500" fill="none" stroke="#4a80ee" stroke-width="2.500" /></svg>
            <svg viewBox="0 0 12 12" class="addon"><path d="M6 2v8M2 6h8" stroke="#666" stroke-width="1.300" /></svg>
          </aside>
        </div>
      </section>

      <section class="excel" aria-label="PortfolioFrontier">
        <div class="xtitle">
          <div class="qat">
            <button aria-label="Save"><svg viewBox="0 0 16 16" class="i9" v-html="icons.save" /></button>
            <button aria-label="Undo"><svg viewBox="0 0 16 16" class="i10" v-html="icons.xundo" /><svg viewBox="0 0 16 16" class="i6" v-html="icons.down" /></button>
            <button class="dim" aria-label="Redo"><svg viewBox="0 0 16 16" class="i10" v-html="icons.xredo" /><svg viewBox="0 0 16 16" class="i6" v-html="icons.down" /></button>
            <button aria-label="Customize"><svg viewBox="0 0 16 16" class="i10" v-html="icons.custom" /></button>
          </div>
          <span class="xname">PortfolioFrontier(1) - Excel</span>
          <span class="xuser">Xu Cheng</span>
          <svg class="xava" viewBox="0 0 16 16"><circle cx="8" cy="8" r="8" fill="#c5b5a7" /><circle cx="8" cy="6" r="3.500" fill="#4b3a35" /><circle cx="8" cy="7" r="2" fill="#e2b79d" /><path d="M3 14c0-6 10-6 10 0-2 2.500-8 2.500-10 0z" fill="#507d80" /><path d="M6 10l2 5 2-5" fill="#efe4da" /><circle cx="3" cy="5" r="1.500" fill="#f0e5e5" /><circle cx="13" cy="9" r="1.500" fill="#bb5464" /></svg>
          <button aria-label="Ribbon options"><svg viewBox="0 0 16 16" class="i10" v-html="icons.ribbon" /></button>
          <button aria-label="Minimize" class="xmin"><svg viewBox="0 0 16 16" class="i8" v-html="icons.minus" /></button>
        </div>
        <nav class="xmenu">
          <button v-for="m in xlMenus" :key="m" :class="{ on: m === '数据' }">{{ m }}</button>
          <button class="tell"><svg viewBox="0 0 16 16" class="i11" v-html="icons.bulb" />告诉我</button>
        </nav>

        <div class="ribbon">
          <div class="group g1">
            <div class="gbody">
              <button class="big"><svg viewBox="0 0 32 32" v-html="icons.getdata" />获取数<span>据<svg viewBox="0 0 16 16" class="i6" v-html="icons.down" /></span></button>
              <div class="mini">
                <button v-for="n in ['pagetxt', 'pageclock', 'pageweb', 'pageconn', 'table']" :key="n" :aria-label="n"><svg viewBox="0 0 16 16" class="i11" v-html="icons[n]" /></button>
              </div>
            </div>
            <span class="glabel">获取和转换数据</span>
          </div>
          <div class="group g2">
            <div class="gbody">
              <button class="big"><svg viewBox="0 0 32 32" v-html="icons.refresh" />全部刷新<svg viewBox="0 0 16 16" class="drop" v-html="icons.down" /></button>
              <div class="list">
                <button><svg viewBox="0 0 16 16" class="i10" v-html="icons.qwin" />查询和连接</button>
                <button disabled><svg viewBox="0 0 16 16" class="i10" v-html="icons.prop" />属性</button>
                <button disabled><svg viewBox="0 0 16 16" class="i10" v-html="icons.link" />编辑链接</button>
              </div>
            </div>
            <span class="glabel">查询和连接</span>
          </div>
          <div class="group g3">
            <div class="gbody">
              <div class="sorts">
                <button aria-label="A to Z"><svg viewBox="0 0 16 17" class="i10" v-html="icons.az" /></button>
                <button aria-label="Z to A"><svg viewBox="0 0 16 17" class="i10" v-html="icons.za" /></button>
              </div>
              <button class="big"><svg viewBox="0 0 32 32" v-html="icons.sort" />排序</button>
              <button class="big ruled"><svg viewBox="0 0 32 32" v-html="icons.funnel" />筛选</button>
              <div class="list">
                <button disabled><svg viewBox="0 0 16 16" class="i10" v-html="icons.clear" />清除</button>
                <button disabled><svg viewBox="0 0 16 16" class="i10" v-html="icons.reapply" />重新应用</button>
                <button><svg viewBox="0 0 16 16" class="i10" v-html="icons.adv" />高级</button>
              </div>
            </div>
            <span class="glabel">排序和筛选</span>
          </div>
          <div class="group g4">
            <div class="gbody">
              <button class="big"><svg viewBox="0 0 32 32" v-html="icons.cols" />分列</button>
              <div class="mini wide">
                <button v-for="n in ['flash', 'consol', 'dup', 'rel', 'valid', 'model']" :key="n" :aria-label="n"><svg viewBox="0 0 16 16" class="i11" v-html="icons[n]" /><svg v-if="n === 'valid'" viewBox="0 0 16 16" class="i6" v-html="icons.down" /></button>
              </div>
            </div>
            <span class="glabel">数据工具</span>
          </div>
          <div class="group g5">
            <div class="gbody">
              <button class="big"><svg viewBox="0 0 32 32" v-html="icons.whatif" />模拟分析<svg viewBox="0 0 16 16" class="drop" v-html="icons.down" /></button>
              <button class="big"><svg viewBox="0 0 32 32" v-html="icons.forecast" />预测<span>工作表</span></button>
            </div>
            <span class="glabel">预测</span>
          </div>
          <div class="group g6">
            <div class="gbody">
              <button class="big boxed"><span class="frame"><svg viewBox="0 0 16 16" class="i10" v-html="icons.outline" /></span>分级显示<svg viewBox="0 0 16 16" class="drop" v-html="icons.down" /></button>
            </div>
          </div>
        </div>

        <div class="fbar">
          <label class="namebox"><input v-model="nameBox" aria-label="Name box"><svg viewBox="0 0 16 16" class="i6" v-html="icons.caret" /></label>
          <span class="grip">⋮</span>
          <div class="fx">
            <button aria-label="Cancel"><svg viewBox="0 0 16 16" class="i11" v-html="icons.close" /></button>
            <button aria-label="Enter"><svg viewBox="0 0 16 16" class="i11" v-html="icons.check" /></button>
            <button class="fn">fx</button>
          </div>
          <input v-model="formula" class="formula" aria-label="Formula">
        </div>

        <div class="sheet">
          <table>
            <colgroup><col class="ch"><col class="ca"><col v-for="n in 6" :key="n" class="cn"><col></colgroup>
            <thead>
              <tr><th class="corner"><svg viewBox="0 0 8 8"><path d="M8 0v8H0z" fill="#b5b5b5" /></svg></th><th v-for="c in columns" :key="c" :class="{ hot: c === 'G' }">{{ c === 'H' ? '' : c }}</th></tr>
            </thead>
            <tbody>
              <tr v-for="r in 33" :key="r">
                <th :class="{ hot: r === 1 }">{{ r }}</th>
                <td v-for="c in columns" :key="c" :class="{ num: isNumber(cells[r]?.[c]), cur: r === 1 && c === 'G' }">{{ cells[r]?.[c] }}</td>
              </tr>
            </tbody>
          </table>
        </div>

        <div class="sheettabs">
          <div class="arrows"><span>◂</span><span>▸</span></div>
          <button class="on">Sheet1</button><button>Sheet2</button><button>Sheet3</button>
          <button class="addsheet" aria-label="New sheet"><svg viewBox="0 0 16 16" class="i12" v-html="icons.circleplus" /></button>
          <span class="grip">⋮</span>
          <div class="hscroll"><button aria-label="Scroll left">◂</button></div>
        </div>
        <footer class="status">
          <span>就绪</span>
          <div class="views">
            <button class="on" aria-label="Normal"><svg viewBox="0 0 16 16" class="i11" v-html="icons.grid" /></button>
            <button aria-label="Page layout"><svg viewBox="0 0 16 16" class="i11" v-html="icons.layout" /></button>
            <button aria-label="Page break"><svg viewBox="0 0 16 16" class="i11" v-html="icons.breaks" /></button>
            <button class="zo" aria-label="Zoom out"><svg viewBox="0 0 16 16" class="i8" v-html="icons.minus" /></button>
            <input v-model="sheetZoom" type="range" aria-label="Zoom">
          </div>
        </footer>
      </section>
    </div>

    <div class="taskbar">
      <button class="startbtn" aria-label="Start"><svg viewBox="0 0 16 16" class="i12" v-html="icons.win" /></button>
      <label class="search"><svg viewBox="0 0 16 16" class="i12" v-html="icons.search" /><input v-model="query" placeholder="在这里输入你要搜索的内容" aria-label="搜索"></label>
      <button class="tb" aria-label="Cortana"><svg viewBox="0 0 16 16" class="i12" v-html="icons.cortana" /></button>
      <button class="tb" aria-label="Task view"><svg viewBox="0 0 16 16" class="i12" v-html="icons.taskview" /></button>
      <button v-for="a in apps" :key="a" class="app" :class="{ front: a === 'excel' }" :aria-label="a">
        <span v-if="a === 'youdao'" class="youdao">有道</span>
        <svg v-else viewBox="0 0 32 32" v-html="icons[a]" />
        <span v-if="a === 'mail'" class="count">21</span>
      </button>
      <div class="tray">
        <svg viewBox="0 0 32 32" class="i14" v-html="icons.weather" /><span class="temp">7°C&nbsp; 阴</span>
        <svg v-for="n in ['up', 'sync', 'battery', 'mute', 'wifi']" :key="n" viewBox="0 0 16 16" class="i11" v-html="icons[n]" />
        <b>英</b><b class="ime">拼</b>
        <time><span>8:32 PM</span><span>11/2/2021</span></time>
        <svg viewBox="0 0 16 16" class="i12" v-html="icons.notif" />
      </div>
    </div>
  </div>
</template>

<style>
body { margin: 0; overflow: hidden; }
</style>

<style scoped>
* { box-sizing: border-box; }
.desktop { height: 100vh; display: flex; flex-direction: column; font-family: "Open Sans", "Noto Sans CJK SC", sans-serif; font-size: 9px; color: #333; overflow: hidden; }
button, input, select { font: inherit; color: inherit; border: 0; padding: 0; margin: 0; background: none; outline: none; }
button { display: inline-flex; align-items: center; justify-content: center; white-space: nowrap; }
select { appearance: none; min-width: 0; }
input { min-width: 0; }
svg { display: block; flex: none; }
.i6 { width: 6px; height: 6px; } .i8 { width: 8px; height: 8px; } .i9 { width: 9px; height: 9px; } .i10 { width: 10px; height: 10px; }
.i11 { width: 11px; height: 11px; } .i12 { width: 12px; height: 12px; } .i13 { width: 13px; height: 13px; } .i14 { width: 14px; height: 14px; } .i15 { width: 15px; height: 15px; }
.windows { flex: 1; min-height: 0; display: grid; grid-template-columns: minmax(0, 525fr) minmax(0, 499fr); }

/* browser */
.browser { display: flex; flex-direction: column; min-width: 0; min-height: 0; overflow: hidden; background: #fff; }
.strip { height: 28px; flex: none; display: flex; align-items: center; background: #e5e5e5; border-top: 2px solid #c9b5ac; padding-top: 3px; }
.pane { width: 30px; }
.tabs { flex: 0 1 330px; display: flex; min-width: 0; }
.tab { flex: 1 1 0; min-width: 0; justify-content: flex-start; gap: 4px; padding-left: 4px; height: 13px; border-left: 1px solid #aaa; color: #777; font-family: Roboto, "Noto Sans CJK SC", sans-serif; }
.tab-active { width: 43px; flex: none; align-self: stretch; display: flex; align-items: center; gap: 4px; padding-left: 5px; background: #f9f9f9; border-radius: 4px 4px 0 0; }
.tab-active b { color: #f0a63c; width: 4px; }
.newtab { width: 22px; color: #777; }
.winctl { margin-left: auto; display: flex; gap: 21px; padding-right: 22px; color: #999; }
.address { height: 25px; flex: none; display: flex; align-items: center; background: #f7f7f7; border-bottom: 1px solid #c9c9c9; }
.nav { display: flex; flex: none; gap: 16px; padding-left: 11px; width: 124px; }
.urlbox { flex: 1 1 200px; min-width: 0; height: 20px; display: flex; align-items: center; gap: 9px; padding: 0 7px 0 9px; background: #fff; border-radius: 3px; }
.url { flex: 1; min-width: 0; white-space: nowrap; text-decoration: none; color: #777; font-size: 9px; }
.url em { font-style: normal; color: #222; }
.exts { display: flex; flex: none; gap: 18px; padding: 0 10px 0 14px; border-right: 1px solid #ccc; }
.exts.right { align-items: center; gap: 17px; padding: 0 16px 0 10px; border: 0; }
.profile { width: 16px; height: 16px; border-radius: 8px; background: #dedede; }
.more { width: 6px; justify-content: flex-start; overflow: hidden; font-weight: 700; }
.dochead { height: 43px; flex: none; display: flex; align-items: center; padding-left: 14px; border-bottom: 1px solid #e3e3e3; }
.doclogo { width: 18px; height: 25px; margin-right: 14px; }
.docname { display: flex; flex-direction: column; gap: 2px; padding-top: 4px; }
.titleline { display: flex; align-items: center; gap: 9px; height: 18px; }
h1 { margin: 0; font: 12px/18px "Open Sans", sans-serif; color: #222; }
.badge { height: 14px; padding: 0 4px; margin: 0 4px 0 -2px; border-radius: 2px; background: #3b72e4; color: #fff; font-weight: 700; font-size: 9px; line-height: 14px; }
.docmenu { display: flex; gap: 10px; height: 16px; }
.docacts { flex: none; margin-left: auto; display: flex; align-items: center; }
.people { display: flex; }
.ava { width: 21px; height: 21px; border-radius: 11px; display: flex; align-items: center; justify-content: center; color: #fff; font-size: 10px; }
.ava.j { background: #5b6bc0; border: 2px solid #e0358c; }
.ava.anon { width: 23px; height: 23px; background: #fff; border: 1px solid #ccc; margin: -1px 0 -1px -3px; }
.ava.xu { margin: 0 -5px 0 13px; background: #7756c0; font-weight: 600; }
.cmt { margin-left: 13px; }
.present { width: 36px; height: 24px; margin: 0 9px 0 15px; border: 1px solid #d5d8dc; border-radius: 12px; gap: 3px; color: #3b73e3; }
.share { width: 52px; height: 24px; border-radius: 3px; background: #3b74e6; color: #fff; gap: 4px; font-weight: 500; }
.docbody { flex: 1; min-height: 0; display: flex; background: #f8f9fa; }
.docmain { flex: 1; min-width: 0; display: flex; flex-direction: column; min-height: 0; }
.toolbar { height: 27px; flex: none; display: flex; align-items: center; background: #fff; color: #555; }
.tools { display: flex; gap: 8px; padding: 0 5px 0 17px; }
.pick { display: flex; align-items: center; justify-content: space-between; height: 14px; padding: 0 4px 0 10px; border-left: 1px solid #ddd; font-size: 8px; }
.zoomsel { width: 49px; } .stylesel { width: 76px; } .fontsel { width: 77px; padding-right: 5px; }
.size { display: grid; grid-template-columns: 16px 27px 16px; height: 16px; border: 1px solid #d5d5d5; }
.size input { border: solid #d5d5d5; border-width: 0 1px; text-align: center; }
.dots { margin-left: 7px; font-size: 7px; }
.editmode { margin-left: auto; width: 28px; height: 17px; gap: 5px; background: #e6eefc; border-radius: 2px; color: #3b6fd8; }
.collapse { width: 30px; }
.ruler { position: relative; height: 11px; flex: none; display: flex; padding-left: 3px; background: #fff; font: 9px/10px "Liberation Sans", sans-serif; color: #555; }
.ruler span { flex: 1 1 0; text-align: center; background: linear-gradient(90deg, #bbb 4%, transparent 4%, transparent 20%, #ccc 20%, #ccc 24%, transparent 24%, transparent 78%, #ccc 78%, #ccc 82%, transparent 82%) 0 4px / 100% 3px no-repeat; }
.ruler .off, .ruler span:last-of-type { background-color: #e8eaed; }
.mark { position: absolute; width: 8px; height: 8px; top: 2px; }
.mark.start { left: 63px; } .mark.end { right: 20px; }
.scroll { position: relative; flex: 1; min-height: 0; overflow: hidden; padding: 0 11px 0 4px; }
.paper { height: 100%; overflow: hidden; background: #fff; border-left: 1px solid #e6e6e6; padding: 28px 13px 0 63px; font: 10px/13px Lato, sans-serif; color: #222; white-space: nowrap; }
h2 { margin: 0 0 13px; font-size: 10px; line-height: 13px; font-weight: 700; color: #111; }
p { margin: 0; }
.j { text-align-last: justify; }
.item { line-height: 12px; }
.gap { margin-top: 13px; }
.last { margin: 12px 0; }
.first { display: flex; }
.first span { width: 32px; flex: none; }
.first p { flex: 1; min-width: 0; }
.answer { color: #3a2fe8; }
.weights { border-collapse: collapse; margin: 4px 0 6px 2px; font: 9px/11px "Liberation Sans", sans-serif; border-left: 2px solid #bbb; }
.weights tr { height: 12px; }
.weights td, .weights th { padding: 0 2px; border-bottom: 1px solid #e3e3e3; border-right: 1px solid #ddd; text-align: left; width: 108px; }
.weights td + td, .weights th + th { width: 44px; }
.weights td:last-child { width: 13px; border-right: 0; }
.weights .num { text-align: right; }
.thumb { position: absolute; right: 3px; top: 293px; width: 5px; height: 58px; border-radius: 3px; background: #d0d2d6; }
.explore { position: absolute; right: 10px; bottom: 0; width: 26px; height: 23px; background: #fff; border: 1px solid #ddd; border-radius: 2px; }
.side { width: 18px; flex: none; background: #fff; display: flex; flex-direction: column; align-items: flex-end; gap: 26px; padding-top: 14px; overflow: hidden; }
.side svg { width: 12px; height: 12px; margin-right: -6px; }
.side .addon { margin-top: 20px; }

/* spreadsheet */
.excel { position: relative; display: flex; flex-direction: column; min-width: 0; min-height: 0; overflow: hidden; background: #e6e6e6; border-left: 1px solid #6fa588; box-shadow: -1px 0 4px #888; }
.xtitle { height: 23px; flex: none; display: flex; align-items: center; background: #217346; color: #fff; padding: 0 4px 0 14px; }
.qat { display: flex; align-items: center; gap: 9px; }
.qat button { gap: 3px; }
.qat .dim { color: #5f9c7a; }
.xname { flex: 1; text-align: right; padding-right: 41px; white-space: nowrap; }
.xava { width: 16px; height: 16px; margin: 0 18px 0 5px; }
.xmin { margin-left: 21px; }
.xmenu { height: 22px; flex: none; display: flex; gap: 15px; padding-left: 10px; background: #f3f2f1; color: #444; }
.xmenu button { padding: 0; border-bottom: 2px solid transparent; height: 21px; }
.xmenu .on { font-weight: 700; border-color: #217346; color: #333; }
.xmenu .tell { margin-left: 7px; gap: 8px; }
.ribbon { height: 63px; flex: none; display: flex; background: #f3f2f1; border-bottom: 1px solid #c8c8c8; font-size: 8px; line-height: 10px; overflow: hidden; }
.group { display: flex; flex-direction: column; align-items: center; flex: none; margin-bottom: 1px; padding-top: 1px; border-right: 1px solid #d0d0d0; }
.g1 { width: 69px; } .g2 { width: 105px; } .g3 { width: 139px; } .g4 { width: 79px; } .g5 { width: 73px; } .g6 { width: 44px; border: 0; }
.gbody { flex: 1; min-height: 0; align-self: stretch; display: flex; padding: 0 3px 0 6px; gap: 4px; }
.glabel { height: 10px; white-space: nowrap; }
.big { flex-direction: column; justify-content: flex-start; align-self: flex-start; gap: 0; min-width: 24px; line-height: 10px; }
.big > svg:first-child { width: 21px; height: 21px; margin-bottom: 3px; }
.big > .drop { width: 6px; height: 6px; margin: 2px 0 0; }
.big span { display: flex; align-items: center; gap: 3px; }
.mini { display: grid; grid-template-columns: 15px 15px; grid-auto-rows: 15px; align-content: start; }
.mini.wide { grid-template-columns: 25px 12px; }
.mini button { gap: 5px; justify-content: flex-start; }
.list { display: flex; flex-direction: column; gap: 6px; padding-top: 3px; }
.list button { gap: 2px; justify-content: flex-start; height: 10px; font-size: 8px; }
.list button:disabled { color: #aaa; }
.sorts { display: flex; flex-direction: column; gap: 12px; padding-top: 8px; }
.g3 .gbody { gap: 5px; }
.g3 .ruled { border-left: 1px solid #d0d0d0; padding-left: 5px; height: 42px; width: 31px; }
.g5 .gbody { gap: 3px; padding-left: 6px; }
.g4 .gbody { padding-left: 7px; }
.frame { width: 21px; height: 21px; margin-bottom: 3px; background: #fff; border: 1px solid #ccc; justify-content: center; }
.fbar { display: flex; align-items: center; flex: none; height: 30px; padding: 7px 0 6px 4px; }
.namebox { width: 68px; height: 17px; display: flex; align-items: center; padding: 0 4px 0 3px; background: #fff; border: 1px solid #ddd; }
.namebox input { flex: 1; font-family: Roboto, sans-serif; }
.grip { width: 20px; text-align: center; color: #888; }
.fx { width: 72px; height: 17px; display: flex; align-items: center; justify-content: space-around; background: #fff; border: 1px solid #ddd; color: #bbb; }
.fn { font: italic 700 11px "Liberation Serif", serif; color: #555; }
.formula { flex: 1; height: 17px; margin-left: 3px; padding-left: 5px; background: #fff; border: 1px solid #ddd; font-family: Roboto, sans-serif; }
.sheet { flex: 1; min-height: 0; overflow: hidden; background: #fff; }
.sheet table { width: 100%; table-layout: fixed; border-collapse: separate; border-spacing: 0; font: 10px/12px "Liberation Sans", sans-serif; color: #111; }
.ch { width: 21px; } .ca { width: 103px; } .cn { width: 59px; }
.sheet th { background: #e6e6e6; font-weight: 400; padding: 0; border-right: 1px solid #c9c9c9; border-bottom: 1px solid #cfcfcf; font-size: 11px; text-align: center; color: #222; line-height: 12px; }
.sheet thead th { height: 13px; }
.sheet tbody tr { height: 13px; }
.sheet tbody tr:nth-child(3n) { height: 14px; }
.sheet td { padding: 0 2px; border-right: 1px solid #d8d8d8; border-bottom: 1px solid #d8d8d8; white-space: nowrap; }
.sheet .num { text-align: right; }
.sheet th.hot { background: #d2d2d2; color: #217346; border-bottom-color: #217346; }
.sheet tbody th.hot { border-right: 1px solid #217346; border-bottom-color: #cfcfcf; }
.sheet .cur { outline: 1px solid #217346; }
.corner svg { width: 8px; height: 8px; margin-left: auto; margin-right: 2px; }
.sheettabs { height: 17px; flex: none; display: flex; align-items: center; border-top: 1px solid #bbb; font-size: 9px; }
.arrows { width: 56px; display: flex; justify-content: space-around; padding: 0 12px 0 8px; color: #bbb; }
.sheettabs button { width: 44px; height: 16px; color: #444; }
.sheettabs .on { background: #fff; border: solid #aaa; border-width: 0 1px; border-bottom: 2px solid #217346; color: #217346; }
.sheettabs .addsheet { border-left: 1px solid #bbb; margin-right: auto; height: 10px; }
.hscroll { width: 149px; height: 11px; background: #fff; display: flex; }
.sheettabs .hscroll button { width: 11px; height: 11px; border: 1px solid #bbb; font-size: 7px; }
.status { height: 15px; flex: none; display: flex; align-items: center; justify-content: space-between; background: #f3f2f1; padding-left: 5px; font-size: 8px; border-top: 1px solid #ddd; }
.views { display: flex; align-items: center; align-self: stretch; width: 141px; }
.views button { width: 26px; align-self: stretch; }
.views .on { background: #d0d0d0; }
.views .zo { width: 14px; color: #555; }
.views input { flex: 1; appearance: none; height: 1px; background: #999; }
.views input::-webkit-slider-thumb { appearance: none; width: 4px; height: 8px; background: #666; }

/* taskbar */
.taskbar { height: 27px; flex: none; display: flex; align-items: stretch; background: linear-gradient(90deg, #f6e9de 0, #f3ece6 20%, #e9efe4 27%, #ededee 32%, #ebebeb 70%, #e4f0c6 74%, #e1efbf 100%); color: #222; }
.startbtn { width: 32px; }
.search { width: 229px; flex: 0 1 229px; display: flex; align-items: center; gap: 8px; padding-left: 7px; background: #fff; border: 1px solid #ddd; }
.search input { flex: 1; font-size: 10px; }
.search input::placeholder { color: #444; opacity: 1; }
.tb { width: 33px; }
.app { position: relative; width: 33px; border-bottom: 2px solid #20b5c0; border-image: linear-gradient(90deg, transparent 9%, #20b5c0 9%, #20b5c0 91%, transparent 91%) 2; }
.app > svg { width: 17px; height: 17px; }
.front { background: #f7f7f7; }
.count { position: absolute; right: 2px; bottom: 2px; width: 14px; height: 11px; border-radius: 6px; background: #d3dce2; border: 1px solid #889; font-size: 8px; font-weight: 700; line-height: 9px; text-align: center; }
.youdao { width: 16px; height: 16px; border-radius: 3px; background: #f5162b; color: #fff; font: 700 6px/16px "Noto Sans CJK SC", sans-serif; }
.tray { margin-left: auto; display: flex; align-items: center; gap: 5px; padding-right: 16px; white-space: nowrap; }
.temp { font-size: 10px; padding-right: 4px; }
.tray b { font-weight: 500; font-size: 10px; }
.tray .ime { border: 1px solid #555; background: #fff; width: 11px; height: 11px; line-height: 9px; text-align: center; font-size: 8px; margin-left: 3px; }
time { display: flex; flex-direction: column; align-items: center; line-height: 12px; font-size: 8px; padding: 0 8px 0 8px; }
</style>
